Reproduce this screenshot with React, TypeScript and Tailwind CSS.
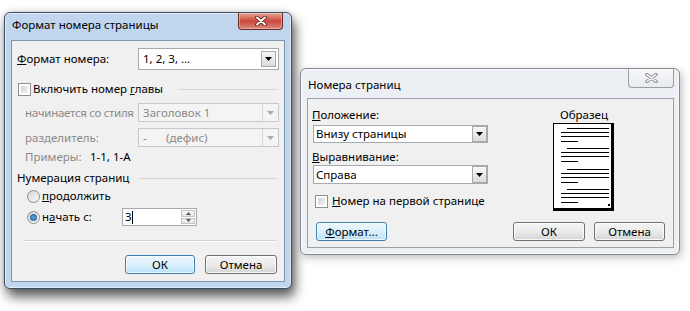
import React from "react";

const F = "font-['Noto_Sans',sans-serif]";

function Arrow({ color = "#000" }: { color?: string }) {
  return (
    <svg width="7" height="4" viewBox="0 0 7 4">
      <path d="M0 0H7L3.5 4Z" fill={color} />
    </svg>
  );
}

function DropBtn() {
  return (
    <div className="w-[15px] h-full border border-[#a9a9a9] bg-linear-to-b from-[#f6f6f6] to-[#dcdcdc] flex items-center justify-center">
      <Arrow />
    </div>
  );
}

function DropBtnDisabled() {
  return (
    <div className="w-[16px] h-full border-l border-[#d6d6d6] flex items-center justify-center">
      <Arrow color="#a9a9a9" />
    </div>
  );
}

function Checkbox() {
  return (
    <div className="w-[13px] h-[13px] border border-[#8f8f8f] bg-white p-[2px] shrink-0">
      <div className="w-full h-full bg-linear-to-br from-[#cfd2d6] to-[#f5f5f5]" />
    </div>
  );
}

function Radio({ checked }: { checked?: boolean }) {
  return (
    <div className="w-[13px] h-[13px] rounded-full border border-[#8f8f8f] bg-linear-to-br from-[#d3d5d8] to-[#fafafa] flex items-center justify-center shrink-0">
      {checked && (
        <div className="w-[7px] h-[7px] rounded-full bg-radial from-[#5fa8dc] to-[#1b4f7c]" />
      )}
    </div>
  );
}

function Btn({
  children,
  focused,
  className,
}: {
  children: React.ReactNode;
  focused?: boolean;
  className: string;
}) {
  return (
    <div
      className={`${className} flex items-center justify-center rounded-[3px] border ${
        focused
          ? "border-[#3c7fb1] bg-linear-to-b from-[#eef7fd] via-[#dcf0fb] to-[#b8e1f6] shadow-[inset_0_0_0_1px_rgba(255,255,255,0.7)]"
          : "border-[#707070] bg-linear-to-b from-[#f4f4f4] via-[#ebebeb] to-[#d5d5d5] shadow-[inset_0_0_0_1px_rgba(255,255,255,0.8)]"
      }`}
    >
      {children}
    </div>
  );
}

function RedClose() {
  return (
    <div className="w-[45px] h-[17px] rounded-b-[4px] border border-t-0 border-[#6d2a22] bg-linear-to-b from-[#e6a497] via-[#c9483b] to-[#d9877a] flex items-center justify-center shadow-[inset_0_0_0_1px_rgba(255,255,255,0.35)]">
      <svg width="12" height="10" viewBox="0 0 12 10">
        <path d="M2 1.5L10 8.5M10 1.5L2 8.5" stroke="#5b1c14" strokeWidth="3.6" strokeLinecap="round" />
        <path d="M2 1.5L10 8.5M10 1.5L2 8.5" stroke="#ffffff" strokeWidth="1.9" strokeLinecap="round" />
      </svg>
    </div>
  );
}

function GrayClose() {
  return (
    <div className="w-[46px] h-[19px] rounded-b-[4px] border border-t-0 border-[#9a9da2] bg-linear-to-b from-[#f7f8fa] to-[#e8ebee] flex items-center justify-center">
      <svg width="13" height="10" viewBox="0 0 13 10">
        <path d="M2 1.5L11 8.5M11 1.5L2 8.5" stroke="#7a7d82" strokeWidth="3.4" strokeLinecap="round" />
        <path d="M2 1.5L11 8.5M11 1.5L2 8.5" stroke="#f4f4f4" strokeWidth="1.6" strokeLinecap="round" />
      </svg>
    </div>
  );
}

function PagePreview() {
  const groups = [6, 26, 47, 67];
  return (
    <svg width="62" height="90" viewBox="0 0 62 90">
      <rect x="0" y="1" width="61" height="88" fill="#000" />
      <rect x="1" y="2" width="57" height="84" fill="#fff" />
      {groups.map((g) => (
        <g key={g} fill="#000">
          <rect x="14" y={g} width="42" height="1" />
          <rect x="8" y={g + 4} width="48" height="1" />
          <rect x="8" y={g + 8} width="48" height="1" />
          <rect x="8" y={g + 13} width="17" height="1" />
        </g>
      ))}
      <rect x="55" y="82" width="2" height="2" fill="#000" />
    </svg>
  );
}

function LeftWindow() {
  return (
    <div className="absolute left-[4px] top-[12px] w-[288px] h-[277px] rounded-[6px] border border-[#3f4f63] bg-[#bfd6ee] shadow-[inset_0_0_0_1px_rgba(255,255,255,0.55),3px_8px_12px_rgba(0,0,0,0.62),0_0_6px_rgba(0,0,0,0.2)] flex flex-col">
      <div className="h-[27px] flex items-start pl-[7px] pr-[8px]">
        <span className="mt-[3px] text-[11.5px] leading-[18px] text-black">Формат номера страницы</span>
        <div className="flex-1" />
        <RedClose />
      </div>
      <div className="mx-[6px] h-[242px] border border-[#8195ac] bg-[#f0f0f0] flex flex-col text-[11.5px] leading-[16px] text-black">
        {/* Формат номера */}
        <div className="mt-[7px] h-[22px] flex items-center pl-[5px]">
          <span className="w-[121px] shrink-0">
            <span className="underline">Ф</span>ормат номера:
          </span>
          <div className="w-[141px] h-[22px] border border-[#a6a9ad] bg-white flex items-center p-[2px]">
            <span className="flex-1 pl-[2px]">1, 2, 3, …</span>
            <DropBtn />
          </div>
        </div>
        {/* Включить номер главы */}
        <div className="mt-[10px] h-[18px] flex items-center pl-[6px] pr-[7px]">
          <Checkbox />
          <span className="ml-[2px]">
            Включить номер <span className="underline">г</span>лавы
          </span>
          <div className="flex-1 ml-[16px] h-px bg-[#d5d5d5]" />
        </div>
        {/* начинается со стиля */}
        <div className="mt-[5px] h-[19px] flex items-center pl-[13px] text-[#8a8a8a]">
          <span className="w-[113px] shrink-0 whitespace-nowrap tracking-[-0.3px]">начинается со стиля</span>
          <div className="w-[141px] h-[19px] border border-[#c5c8cc] bg-[#f4f4f4] flex items-center">
            <span className="flex-1 pl-[4px]">Заголовок 1</span>
            <DropBtnDisabled />
          </div>
        </div>
        {/* разделитель */}
        <div className="mt-[6px] h-[19px] flex items-center pl-[13px] text-[#8a8a8a]">
          <span className="w-[113px] shrink-0">разделитель:</span>
          <div className="w-[141px] h-[19px] border border-[#c5c8cc] bg-[#f4f4f4] flex items-center">
            <span className="pl-[4px] w-[27px]">-</span>
            <span className="flex-1">(дефис)</span>
            <DropBtnDisabled />
          </div>
        </div>
        {/* Примеры */}
        <div className="mt-px h-[18px] flex items-center pl-[13px]">
          <span className="w-[65px] shrink-0 text-[#8a8a8a]">Примеры:</span>
          <span>1-1, 1-А</span>
        </div>
        {/* Нумерация страниц */}
        <div className="mt-[3px] h-[18px] flex items-center pl-[5px] pr-[7px]">
          <span>Нумерация страниц</span>
          <div className="flex-1 ml-[10px] h-px bg-[#d5d5d5]" />
        </div>
        {/* продолжить */}
        <div className="h-[18px] flex items-center pl-[15px]">
          <Radio />
          <span className="ml-[2px]">
            <span className="underline">п</span>родолжить
          </span>
        </div>
        {/* начать с */}
        <div className="mt-[3px] h-[18px] flex items-center pl-[15px]">
          <Radio checked />
          <span className="ml-[2px] w-[80px] shrink-0">
            н<span className="underline">а</span>чать с:
          </span>
          <div className="w-[75px] h-[18px] border border-[#a6a9ad] bg-white flex">
            <div className="flex-1 flex items-center pl-[2px]">
              <span>3</span>
              <span className="w-px h-[13px] bg-black" />
            </div>
            <div className="w-[16px] flex flex-col p-px gap-px">
              <div className="flex-1 border border-[#c2c5c9] bg-linear-to-b from-[#f8f8f8] to-[#e3e3e3] flex items-center justify-center">
                <svg width="5" height="3" viewBox="0 0 5 3">
                  <path d="M0 3H5L2.5 0Z" fill="#555" />
                </svg>
              </div>
              <div className="flex-1 border border-[#c2c5c9] bg-linear-to-b from-[#f8f8f8] to-[#e3e3e3] flex items-center justify-center">
                <svg width="5" height="3" viewBox="0 0 5 3">
                  <path d="M0 0H5L2.5 3Z" fill="#555" />
                </svg>
              </div>
            </div>
          </div>
        </div>
        {/* separator */}
        <div className="mt-[14px] ml-[11px] mr-[7px] h-[2px] border-t border-[#d3d3d3] border-b border-b-white" />
        {/* buttons */}
        <div className="mt-[13px] flex justify-end pr-[7px] gap-[10px]">
          <Btn focused className="w-[70px] h-[19px]">
            ОК
          </Btn>
          <Btn className="w-[72px] h-[19px]">Отмена</Btn>
        </div>
      </div>
    </div>
  );
}

function RightWindow() {
  return (
    <div className="absolute left-[300px] top-[68px] w-[380px] h-[187px] rounded-[6px] border border-[#858a90] bg-[#eceff3] shadow-[inset_0_0_0_1px_rgba(255,255,255,0.7),2px_3px_8px_rgba(0,0,0,0.25)] flex flex-col">
      <div className="h-[29px] flex items-start pl-[7px] pr-[5px]">
        <span className="mt-[7px] text-[11.5px] leading-[18px] text-black">Номера страниц</span>
        <div className="flex-1" />
        <GrayClose />
      </div>
      <div className="ml-[6px] mr-[5px] h-[150px] border border-[#9aa0a7] bg-[#f0f0f0] flex flex-col text-[11.5px] leading-[16px] text-black">
        <div className="flex">
          <div className="flex flex-col pl-[4px] w-[180px] shrink-0">
            <span className="mt-[8px] h-[16px]">
              <span className="underline">П</span>оложение:
            </span>
            <div className="mt-[2px] ml-px w-[175px] h-[18px] border border-[#a6a9ad] bg-white flex items-center">
              <span className="flex-1 pl-[2px]">Внизу страницы</span>
              <DropBtn />
            </div>
            <span className="mt-[6px] h-[16px]">
              <span className="underline">В</span>ыравнивание:
            </span>
            <div className="ml-px w-[175px] h-[19px] border border-[#a6a9ad] bg-white flex items-center">
              <span className="flex-1 pl-[2px]">Справа</span>
              <DropBtn />
            </div>
            <div className="mt-[8px] ml-[3px] h-[18px] flex items-center">
              <Checkbox />
              <span className="ml-[4px] whitespace-nowrap">
                <span className="underline">Н</span>омер на первой странице
              </span>
            </div>
          </div>
          <div className="ml-[65px] w-[62px] flex flex-col items-center">
            <span className="mt-[8px] h-[15px] leading-[15px]">Образец</span>
            <PagePreview />
          </div>
        </div>
        <div className="mt-[10px] flex items-center pl-[8px] pr-[8px]">
          <Btn focused className="w-[71px] h-[19px]">
            <span>
              <span className="underline">Ф</span>ормат...
            </span>
          </Btn>
          <div className="flex-1" />
          <Btn className="w-[72px] h-[19px]">ОК</Btn>
          <Btn className="ml-[9px] w-[71px] h-[19px]">Отмена</Btn>
        </div>
      </div>
    </div>
  );
}

export default function App() {
  return (
    <div className={`relative w-[690px] h-[311px] bg-white overflow-hidden ${F}`}>
      <LeftWindow />
      <RightWindow />
    </div>
  );
}
